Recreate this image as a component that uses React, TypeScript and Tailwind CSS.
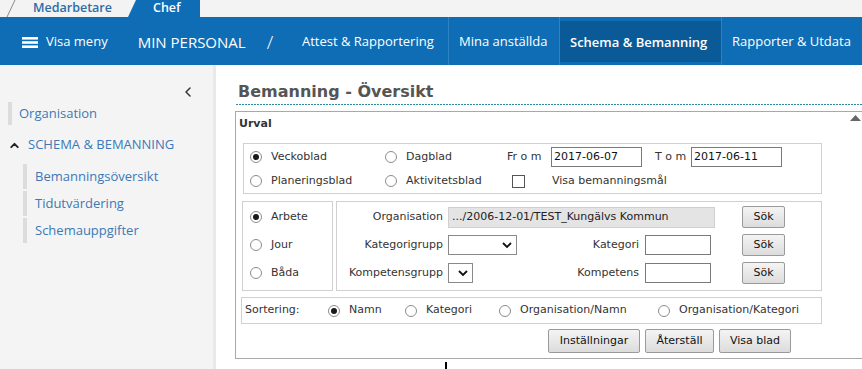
import React from "react";
import { ChevronLeft, ChevronUp } from "lucide-react";

const Radio = ({ checked = false }: { checked?: boolean }) => (
  <span className="w-[12px] h-[12px] rounded-full border border-[#8c8c8c] bg-white flex items-center justify-center shrink-0">
    {checked && <span className="w-[6px] h-[6px] rounded-full bg-[#1a1a1a]" />}
  </span>
);

const RadioItem = ({ label, checked = false, w }: { label: string; checked?: boolean; w: string }) => (
  <div className={`flex items-center shrink-0 ${w}`}>
    <Radio checked={checked} />
    <span className="ml-[9px]">{label}</span>
  </div>
);

const Btn = ({ label, w }: { label: string; w: string }) => (
  <button
    className={`${w} h-full shrink-0 border border-[#9a9a9a] rounded-[2px] bg-gradient-to-b from-[#f4f4f4] to-[#dcdcdc] text-[11px] text-[#111] flex items-center justify-center`}
  >
    {label}
  </button>
);

const SelectBox = ({ w }: { w: string }) => (
  <div className={`${w} h-[20px] border border-[#8a8a8a] bg-white flex items-center justify-end pr-[4px] shrink-0`}>
    <svg width="10" height="7" viewBox="0 0 10 7">
      <path d="M1 1 L5 5 L9 1" fill="none" stroke="#111" strokeWidth="1.8" />
    </svg>
  </div>
);

export default function App() {
  return (
    <div className="w-[862px] h-[369px] overflow-hidden bg-white relative font-['Open_Sans',sans-serif]">
      {/* top tabs */}
      <div className="h-[17px] bg-[#f3f3f3] flex items-stretch">
        <div className="relative w-[128px] flex items-center">
          <svg className="absolute left-[6px] top-0" width="10" height="17" viewBox="0 0 10 17">
            <line x1="1" y1="17" x2="9" y2="0" stroke="#8a8a8a" strokeWidth="1" />
          </svg>
          <span className="ml-[33px] text-[12.5px] font-semibold text-[#2c6ea8] leading-none">Medarbetare</span>
        </div>
        <div className="w-[72px] bg-[#0e6db4] [clip-path:polygon(8px_0,100%_0,100%_100%,0_100%)] flex items-center">
          <span className="ml-[25px] text-[12.5px] font-semibold text-white leading-none">Chef</span>
        </div>
      </div>

      {/* nav bar */}
      <nav className="h-[48px] bg-[#0e6db4] flex items-stretch text-white text-[13px]">
        <div className="flex items-center pl-[22px] pt-[2px] w-[291px] shrink-0">
          <svg width="16" height="11" viewBox="0 0 16 11" className="shrink-0">
            <rect x="0" y="0" width="16" height="2.6" fill="white" />
            <rect x="0" y="4.2" width="16" height="2.6" fill="white" />
            <rect x="0" y="8.4" width="16" height="2.6" fill="white" />
          </svg>
          <span className="ml-[8px]">Visa meny</span>
          <span className="ml-[30px] text-[15px]">MIN PERSONAL</span>
          <span className="ml-[21px] text-[19px] font-light">/</span>
        </div>
        <div className="w-[157px] shrink-0 flex items-center pl-[11px] pt-[2px]">Attest &amp; Rapportering</div>
        <div className="w-px bg-[#2f82c2] shrink-0" />
        <div className="w-[110px] shrink-0 flex items-center pl-[10px] pt-[2px]">Mina anställda</div>
        <div className="w-px bg-[#2f82c2] shrink-0" />
        <div className="w-[161px] shrink-0 flex items-center pl-[10px] pt-[2px] bg-[#0a5a97] mt-[4px] mb-[3px] font-semibold">
          Schema &amp; Bemanning
        </div>
        <div className="w-px bg-[#2f82c2] shrink-0" />
        <div className="flex-1 flex items-center pl-[10px] pt-[2px] whitespace-nowrap">Rapporter &amp; Utdata</div>
      </nav>

      <div className="flex h-[304px]">
        {/* sidebar */}
        <aside className="w-[216px] shrink-0 bg-[#f4f4f4] border-r-[3px] border-[#e9e9e9] pt-[19px] text-[13px] text-[#3b79b7]">
          <div className="flex justify-end pr-[17px] h-[16px]">
            <ChevronLeft size={16} strokeWidth={2.2} color="#333" />
          </div>
          <div className="mt-[2px] ml-[8px] border-l-4 border-[#dcdcdc] h-[23px] flex items-center pl-[7px]">Organisation</div>
          <div className="mt-[8px] h-[24px] flex items-center pl-[8px]">
            <ChevronUp size={13} strokeWidth={3.5} color="#222" />
            <span className="ml-[7px]">SCHEMA &amp; BEMANNING</span>
          </div>
          <div className="ml-[23px] mt-[7px] flex flex-col gap-[2px]">
            {["Bemanningsöversikt", "Tidutvärdering", "Schemauppgifter"].map((t) => (
              <div key={t} className="h-[25px] border-l-4 border-[#dcdcdc] flex items-center pl-[8px]">
                {t}
              </div>
            ))}
          </div>
        </aside>

        {/* main */}
        <main className="flex-1 relative overflow-hidden pt-[14px] font-['DejaVu_Sans',Verdana,sans-serif] text-[11px] text-[#333]">
          <div className="ml-[20px] h-[25px] pl-[2px] flex items-center">
            <span className="text-[16px] font-bold text-[#555] leading-none">Bemanning - Översikt</span>
          </div>
          <div className="ml-[20px] h-px bg-[repeating-linear-gradient(to_right,#2a8b9b_0_2px,transparent_2px_3px)]" />

          <div className="ml-[19px] mt-[6px] w-[628px] border border-[#a9a9a9] pb-[5px] relative">
            <svg className="absolute right-[1px] top-[3px]" width="11" height="6" viewBox="0 0 11 6">
              <path d="M0 6 L5.5 0 L11 6 Z" fill="#666" />
            </svg>
            <div className="h-[24px] flex items-center pl-[3px] font-bold">Urval</div>

            {/* box 1 */}
            <div className="ml-[7px] mt-[7px] w-[579px] border border-[#d0d0d0] pt-[1px]">
              <div className="h-[24px] flex items-center pl-[6px]">
                <RadioItem label="Veckoblad" checked w="w-[135px]" />
                <RadioItem label="Dagblad" w="w-[122px]" />
                <span className="w-[44px] shrink-0">Fr o m</span>
                <div className="w-[91px] h-[20px] border border-[#7a7a7a] flex items-center pl-[2px] text-[#111] shrink-0">2017-06-07</div>
                <span className="ml-[13px] w-[36px] shrink-0">T o m</span>
                <div className="w-[91px] h-[20px] border border-[#7a7a7a] flex items-center pl-[2px] text-[#111] shrink-0">2017-06-11</div>
              </div>
              <div className="h-[24px] flex items-center pl-[6px]">
                <RadioItem label="Planeringsblad" w="w-[135px]" />
                <RadioItem label="Aktivitetsblad" w="w-[122px]" />
                <span className="ml-[5px] w-[13px] h-[13px] border border-[#555] bg-white shrink-0" />
                <span className="ml-[27px]">Visa bemanningsmål</span>
              </div>
            </div>

            {/* box 2 */}
            <div className="ml-[6px] mt-[7px] flex">
              <div className="w-[91px] h-[90px] border border-[#d0d0d0] pt-[1px] pl-[7px] shrink-0">
                <RadioItem label="Arbete" checked w="h-[28px]" />
                <RadioItem label="Jour" w="h-[28px]" />
                <RadioItem label="Båda" w="h-[28px]" />
              </div>
              <div className="ml-[3px] w-[486px] h-[90px] border border-[#d0d0d0] pt-[1px] shrink-0">
                <div className="h-[28px] flex items-center">
                  <span className="w-[106px] text-right shrink-0">Organisation</span>
                  <div className="ml-[5px] w-[267px] h-[21px] border border-[#cfcfcf] bg-[#e4e4e4] flex items-center pl-[3px] text-[#222] shrink-0 whitespace-nowrap overflow-hidden">
                    .../2006-12-01/TEST_Kungälvs Kommun
                  </div>
                  <div className="ml-[27px] h-[22px] flex">
                    <Btn label="Sök" w="w-[43px]" />
                  </div>
                </div>
                <div className="h-[28px] flex items-center">
                  <span className="w-[106px] text-right shrink-0">Kategorigrupp</span>
                  <div className="ml-[5px]">
                    <SelectBox w="w-[69px]" />
                  </div>
                  <span className="w-[122px] text-right shrink-0">Kategori</span>
                  <div className="ml-[6px] w-[66px] h-[20px] border border-[#7a7a7a] bg-white shrink-0" />
                  <div className="ml-[31px] h-[22px] flex">
                    <Btn label="Sök" w="w-[43px]" />
                  </div>
                </div>
                <div className="h-[28px] flex items-center">
                  <span className="w-[106px] text-right shrink-0">Kompetensgrupp</span>
                  <div className="ml-[5px]">
                    <SelectBox w="w-[25px]" />
                  </div>
                  <span className="w-[166px] text-right shrink-0">Kompetens</span>
                  <div className="ml-[6px] w-[66px] h-[20px] border border-[#7a7a7a] bg-white shrink-0" />
                  <div className="ml-[31px] h-[22px] flex">
                    <Btn label="Sök" w="w-[43px]" />
                  </div>
                </div>
              </div>
            </div>

            {/* box 3 */}
            <div className="ml-[5px] mt-[6px] w-[581px] h-[27px] border border-[#d0d0d0] flex items-center pl-[3px]">
              <span className="w-[83px] shrink-0">Sortering:</span>
              <RadioItem label="Namn" checked w="w-[77px]" />
              <RadioItem label="Kategori" w="w-[94px]" />
              <RadioItem label="Organisation/Namn" w="w-[159px]" />
              <RadioItem label="Organisation/Kategori" w="w-[150px]" />
            </div>

            {/* buttons */}
            <div className="ml-[312px] mt-[5px] h-[24px] flex gap-[5px]">
              <Btn label="Inställningar" w="w-[92px]" />
              <Btn label="Återställ" w="w-[69px]" />
              <Btn label="Visa blad" w="w-[72px]" />
            </div>
          </div>

          <div className="absolute left-[229px] top-[297px] w-[2px] h-[8px] bg-black" />
        </main>
      </div>
    </div>
  );
}
